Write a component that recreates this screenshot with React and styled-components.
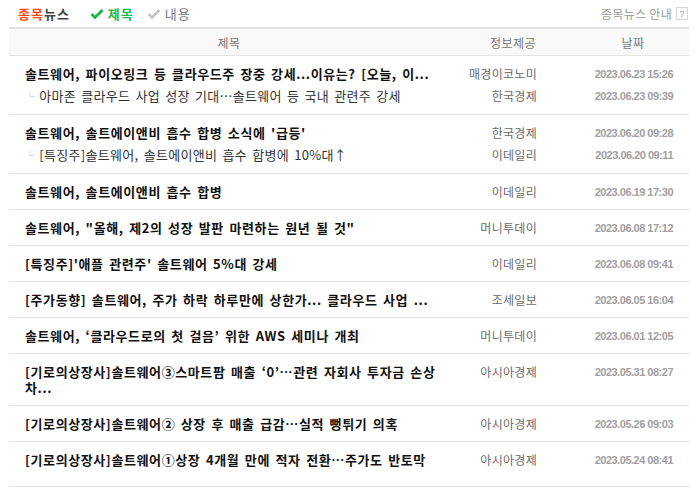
import React from 'react';
import styled, { createGlobalStyle } from 'styled-components';

const GlobalStyle = createGlobalStyle`
  body {
    margin: 0;
    background: #fff;
    font-family: 'Noto Sans CJK KR', 'Noto Sans', sans-serif;
  }
`;

const Wrap = styled.div`
  width: 680px;
  padding-left: 9px;
`;

const TopBar = styled.div`
  display: flex;
  align-items: center;
  height: 27px;
  padding-left: 9px;
`;

const Brand = styled.div`
  font-size: 13px;
  font-weight: 700;
  color: #444;
  margin-right: 20px;
  letter-spacing: 1px;

  em {
    font-style: normal;
    color: #ff4a0a;
  }
`;

const Tab = styled.div`
  display: flex;
  align-items: center;
  gap: 4px;
  font-size: 13px;
  letter-spacing: 1px;
  font-weight: ${(p) => (p.$active ? 700 : 400)};
  color: ${(p) => (p.$active ? '#19b84c' : '#777')};
  margin-right: 13px;
`;

const Guide = styled.div`
  margin-left: auto;
  display: flex;
  align-items: center;
  gap: 4px;
  font-size: 12px;
  letter-spacing: 0.3px;
  color: #9a9a9a;
`;

const QBox = styled.span`
  display: inline-flex;
  align-items: center;
  justify-content: center;
  width: 10px;
  height: 11px;
  border: 1px solid #d6d6d6;
  font-family: 'Liberation Sans', sans-serif;
  font-size: 9px;
  color: #999;
  margin-right: 1px;
`;

const Table = styled.div`
  border-top: 2px solid #dfdfdf;
`;

const Grid = styled.div`
  display: grid;
  grid-template-columns: 440px 128px 112px;
`;

const HeadRow = styled(Grid)`
  height: 26px;
  align-items: center;
  background: #f9f9f9;
  border-bottom: 1px solid #e5e5e5;
  font-size: 12px;
  letter-spacing: 0.5px;
  color: #777;
  text-align: center;
`;

const Row = styled(Grid)`
  padding: 10px 0 ${(p) => (p.$last ? '18px' : '9px')};
  border-bottom: 1px solid #e3e3e3;
`;

const TitleCell = styled.div`
  padding: 0 12px 0 16px;
`;

const SourceCell = styled.div`
  padding-right: 40px;
  text-align: right;
  font-size: 12px;
  letter-spacing: 0.3px;
  color: #6a6a6a;
`;

const DateCell = styled.div`
  padding-right: 16px;
  text-align: right;
  font-family: 'Liberation Sans', sans-serif;
  font-size: 11px;
  font-weight: 700;
  letter-spacing: -0.5px;
  color: #a0a0a0;
`;

const Line = styled.div`
  line-height: 16px;
  white-space: nowrap;
  margin-top: ${(p) => (p.$sub ? '6px' : '0')};
`;

const Title = styled.div`
  line-height: 16px;
  font-size: 13px;
  font-weight: 700;
  letter-spacing: 0.6px;
  word-spacing: 2px;
  color: #111;
`;

const Sub = styled.div`
  margin-top: 6px;
  line-height: 16px;
  font-size: 13px;
  letter-spacing: 0.3px;
  word-spacing: 2px;
  color: #333;
  white-space: nowrap;

  span {
    font-size: 10px;
    color: #bbb;
    margin-right: 4px;
  }
`;

const Check = ({ color }) => (
  <svg width="14" height="12" viewBox="0 0 14 12">
    <polyline points="1.5,6 5,9.5 12.5,2" fill="none" stroke={color} strokeWidth="2.8" />
  </svg>
);

const news = [
  {
    title: '솔트웨어, 파이오링크 등 클라우드주 장중 강세...이유는? [오늘, 이...',
    source: '매경이코노미',
    date: '2023.06.23 15:26',
    sub: { title: '아마존 클라우드 사업 성장 기대…솔트웨어 등 국내 관련주 강세', source: '한국경제', date: '2023.06.23 09:39' },
  },
  {
    title: "솔트웨어, 솔트에이앤비 흡수 합병 소식에 '급등'",
    source: '한국경제',
    date: '2023.06.20 09:28',
    sub: { title: '[특징주]솔트웨어, 솔트에이앤비 흡수 합병에 10%대↑', source: '이데일리', date: '2023.06.20 09:11' },
  },
  { title: '솔트웨어, 솔트에이앤비 흡수 합병', source: '이데일리', date: '2023.06.19 17:30' },
  { title: '솔트웨어, "올해, 제2의 성장 발판 마련하는 원년 될 것"', source: '머니투데이', date: '2023.06.08 17:12' },
  { title: "[특징주]'애플 관련주' 솔트웨어 5%대 강세", source: '이데일리', date: '2023.06.08 09:41' },
  { title: '[주가동향] 솔트웨어, 주가 하락 하루만에 상한가... 클라우드 사업 ...', source: '조세일보', date: '2023.06.05 16:04' },
  { title: '솔트웨어, ‘클라우드로의 첫 걸음’ 위한 AWS 세미나 개최', source: '머니투데이', date: '2023.06.01 12:05' },
  { title: '[기로의상장사]솔트웨어③스마트팜 매출 ‘0’…관련 자회사 투자금 손상 차...', source: '아시아경제', date: '2023.05.31 08:27' },
  { title: '[기로의상장사]솔트웨어② 상장 후 매출 급감…실적 뻥튀기 의혹', source: '아시아경제', date: '2023.05.26 09:03' },
  { title: '[기로의상장사]솔트웨어①상장 4개월 만에 적자 전환…주가도 반토막', source: '아시아경제', date: '2023.05.24 08:41' },
];

export default function App() {
  return (
    <Wrap>
      <GlobalStyle />
      <TopBar>
        <Brand>
          <em>종목</em>뉴스
        </Brand>
        <Tab $active>
          <Check color="#19b84c" />
          제목
        </Tab>
        <Tab>
          <Check color="#c8c8c8" />
          내용
        </Tab>
        <Guide>
          종목뉴스 안내
          <QBox>?</QBox>
        </Guide>
      </TopBar>
      <Table>
        <HeadRow>
          <div>제목</div>
          <div>정보제공</div>
          <div>날짜</div>
        </HeadRow>
        {news.map((item, i) => (
          <Row key={i} $last={i === news.length - 1}>
            <TitleCell>
              <Title>{item.title}</Title>
              {item.sub && (
                <Sub>
                  <span>└</span>
                  {item.sub.title}
                </Sub>
              )}
            </TitleCell>
            <SourceCell>
              <Line>{item.source}</Line>
              {item.sub && <Line $sub>{item.sub.source}</Line>}
            </SourceCell>
            <DateCell>
              <Line>{item.date}</Line>
              {item.sub && <Line $sub>{item.sub.date}</Line>}
            </DateCell>
          </Row>
        ))}
      </Table>
    </Wrap>
  );
}
